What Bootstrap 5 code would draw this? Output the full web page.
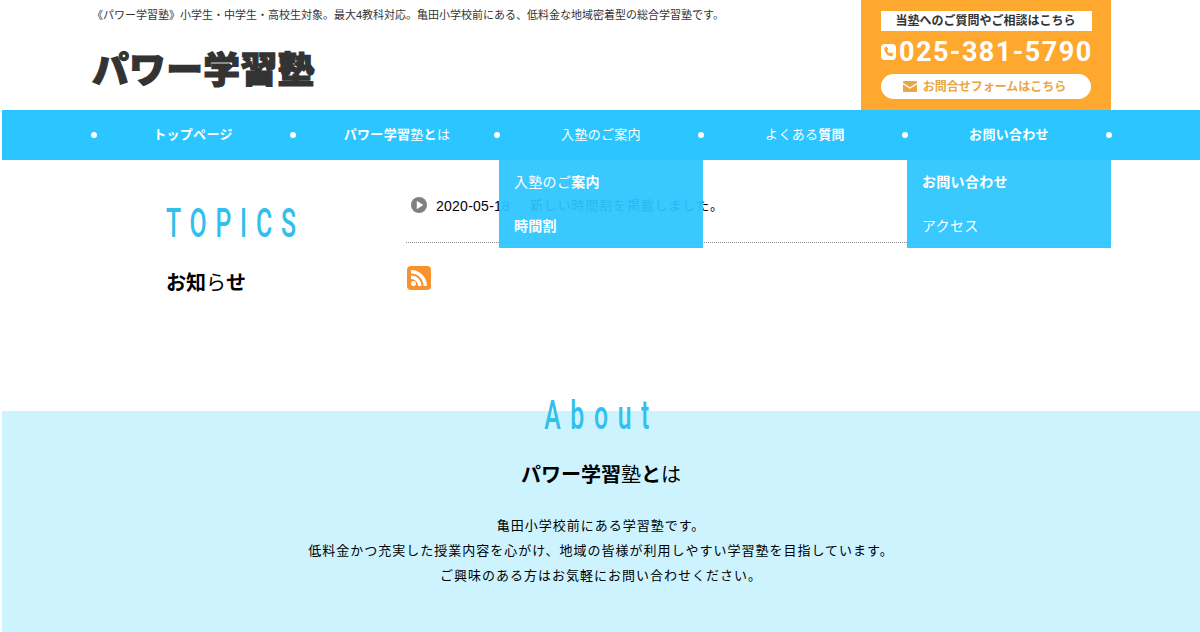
<!DOCTYPE html>
<html lang="ja">
<head>
    <meta charset="UTF-8">
    <meta name="viewport" content="width=device-width, initial-scale=1.0">
    <title>パワー学習塾</title>
    <link href="https://cdn.jsdelivr.net/npm/bootstrap@5.3.0/dist/css/bootstrap.min.css" rel="stylesheet">
    <style>
        body { font-family: "Liberation Sans", "Noto Sans CJK JP", sans-serif; color: #000; font-size: 13px; padding-left: 2px; height: 632px; overflow: hidden; }
        b { font-weight: 700; }
        .site-head { height: 110px; padding-left: 90px; width: 1109px; }
        .tagline { font-size: 11px; color: #333; line-height: 14px; padding-top: 8px; margin: 0; }
        .site-logo { font-size: 36.8px; font-weight: 900; color: #333; letter-spacing: .3px; line-height: 44px; margin: 27px 0 0; -webkit-text-stroke: 1.2px #333; }
        .contact-box { width: 250px; background: #fea82f; padding: 11px 19px 0 20px; }
        .contact-title { background: #fff; height: 20px; line-height: 20px; font-size: 12px; font-weight: 700; color: #333; text-align: center; padding-right: 2px; }
        .tel-row { height: 32px; margin-top: 5px; color: #fff; white-space: nowrap; }
        .tel-num { font-family: Roboto, sans-serif; font-size: 27px; font-weight: 700; letter-spacing: 1.45px; line-height: 32px; margin-left: 3px; }
        .form-pill { background: #fff; height: 25px; margin-top: 6px; border-radius: 13px; color: #eaa643; font-size: 12px; font-weight: 700; gap: 6px; width: 210px; padding-right: 3px; }
        .main-nav { background: #2bc5ff; height: 50px; padding-left: 89px; width: 1198px; }
        .nav-cell { width: 204px; height: 50px; line-height: 50px; color: #fff; font-size: 13px; text-align: center; position: relative; letter-spacing: .3px; }
        .nav-cell::before { content: ""; position: absolute; left: -5px; top: 22px; width: 6px; height: 6px; border-radius: 50%; background: #fff; }
        .nav-cell:first-child::before { left: 0; }
        .nav-cell:last-child::after { content: ""; position: absolute; right: -1px; top: 22px; width: 6px; height: 6px; border-radius: 50%; background: #fff; }
        .drop-menu { position: absolute; left: 0; top: 50px; width: 204px; background: rgba(43, 197, 255, .93); text-align: left; z-index: 5; font-size: 14px; }
        .drop-menu div { height: 44px; line-height: 45px; padding-left: 15px; }
        .topics-wrap { height: 251px; padding-left: 165px; width: 1109px; }
        .topics-side { width: 240px; padding-top: 42px; margin-left: -1px; }
        .sec-title { font-family: Roboto, sans-serif; font-weight: 500; color: #33bfec; font-size: 40px; letter-spacing: 14.2px; line-height: 44px; margin: 0; white-space: nowrap; transform: scaleX(.62); transform-origin: left center; }
        .sec-sub { font-size: 20px; color: #000; line-height: 28px; margin: 23px 0 0; }
        .topics-main { flex: 1; padding-top: 37px; }
        .news-row { height: 46px; border-bottom: 1px dotted #888; padding-left: 5px; line-height: 18px; }
        .news-date { font-size: 14px; letter-spacing: .25px; width: 94px; margin-left: 9px; }
        .news-text { font-size: 13px; letter-spacing: .85px; }
        .rss-mark { margin: 23px 0 0 1px; display: block; }
        .about-band { background: #cdf3ff; height: 221px; text-align: center; display: flow-root; }
        .about-title { margin-top: -17px; transform-origin: center center; letter-spacing: 15.6px; padding-left: 2px; }
        .about-sub { font-size: 20px; line-height: 28px; margin: 23px 0 24px; }
        .about-copy { font-size: 13px; letter-spacing: 1px; line-height: 25px; margin: 0; }
    </style>
</head>
<body>
    <header class="site-head d-flex justify-content-between">
        <div>
            <p class="tagline">《パワー学習塾》小学生・中学生・高校生対象。最大4教科対応。亀田小学校前にある、低料金な地域密着型の総合学習塾です。</p>
            <p class="site-logo">パワー学習塾</p>
        </div>
        <div class="contact-box">
            <div class="contact-title">当塾へのご質問やご相談はこちら</div>
            <div class="tel-row d-flex align-items-center">
                <svg class="flex-shrink-0" width="15" height="16" viewBox="0 0 15 16"><rect width="15" height="16" rx="4" fill="#fff"/><path d="M4.200 3.300l1.800-.6 1.300 2.800-1.100.9c.4 1.200 1.300 2.300 2.600 2.900l1-1 2.500 1.600-.7 1.800c-.3.5-1 .8-1.800.6C6.500 11.600 3.800 8.700 3.300 5.200c-.1-.7.300-1.500.9-1.900z" fill="#fea82f"/></svg>
                <span class="tel-num">025-381-5790</span>
            </div>
            <div class="form-pill d-flex align-items-center justify-content-center">
                <svg width="14" height="11" viewBox="0 0 14 11"><path d="M1 0h12a1 1 0 0 1 1 1v.8L7 6.300 0 1.800V1a1 1 0 0 1 1-1z" fill="#eaa643"/><path d="M0 3.300l7 4.500 7-4.500V10a1 1 0 0 1-1 1H1a1 1 0 0 1-1-1z" fill="#eaa643"/></svg>
                <span>お問合せフォームはこちら</span>
            </div>
        </div>
    </header>

    <nav class="main-nav d-flex">
        <div class="nav-cell"><b>トップページ</b></div>
        <div class="nav-cell"><b>パワー学習</b>塾<b>と</b>は</div>
        <div class="nav-cell">入塾のご案内
            <div class="drop-menu">
                <div>入塾のご<b>案内</b></div>
                <div><b>時間割</b></div>
            </div>
        </div>
        <div class="nav-cell">よくある<b>質問</b></div>
        <div class="nav-cell"><b>お問い合わせ</b>
            <div class="drop-menu">
                <div><b>お問い合わせ</b></div>
                <div>アクセス</div>
            </div>
        </div>
    </nav>

    <section class="topics-wrap d-flex">
        <div class="topics-side">
            <h2 class="sec-title">TOPICS</h2>
            <p class="sec-sub"><b>お知</b>ら<b>せ</b></p>
        </div>
        <div class="topics-main">
            <div class="news-row d-flex">
                <svg width="16" height="16" viewBox="0 0 16 16"><circle cx="8" cy="8" r="8" fill="#808080"/><path d="M5.800 3.800v8.400l6.500-4.200z" fill="#fff"/></svg>
                <span class="news-date">2020-05-18</span>
                <span class="news-text">新しい時間割を掲載しました。</span>
            </div>
            <svg class="rss-mark" width="24" height="24" viewBox="0 0 24 24"><rect width="24" height="24" rx="4" fill="#f7922e"/><circle cx="6.500" cy="17.500" r="2.500" fill="#fff"/><path d="M4 9.500v3.400c3.900 0 7.100 3.200 7.100 7.100h3.400C14.500 14.200 9.800 9.500 4 9.500z" fill="#fff"/><path d="M4 4v3.400c7 0 12.600 5.600 12.600 12.600H20C20 11.200 12.800 4 4 4z" fill="#fff"/></svg>
        </div>
    </section>

    <section class="about-band">
        <h2 class="sec-title about-title">About</h2>
        <p class="about-sub"><b>パワー学習</b>塾<b>と</b>は</p>
        <p class="about-copy">亀田小学校前にある学習塾です。<br>低料金かつ充実した授業内容を心がけ、地域の皆様が利用しやすい学習塾を目指しています。<br>ご興味のある方はお気軽にお問い合わせください。</p>
    </section>
    <script src="https://cdn.jsdelivr.net/npm/bootstrap@5.3.0/dist/js/bootstrap.bundle.min.js"></script>
</body>
</html>
